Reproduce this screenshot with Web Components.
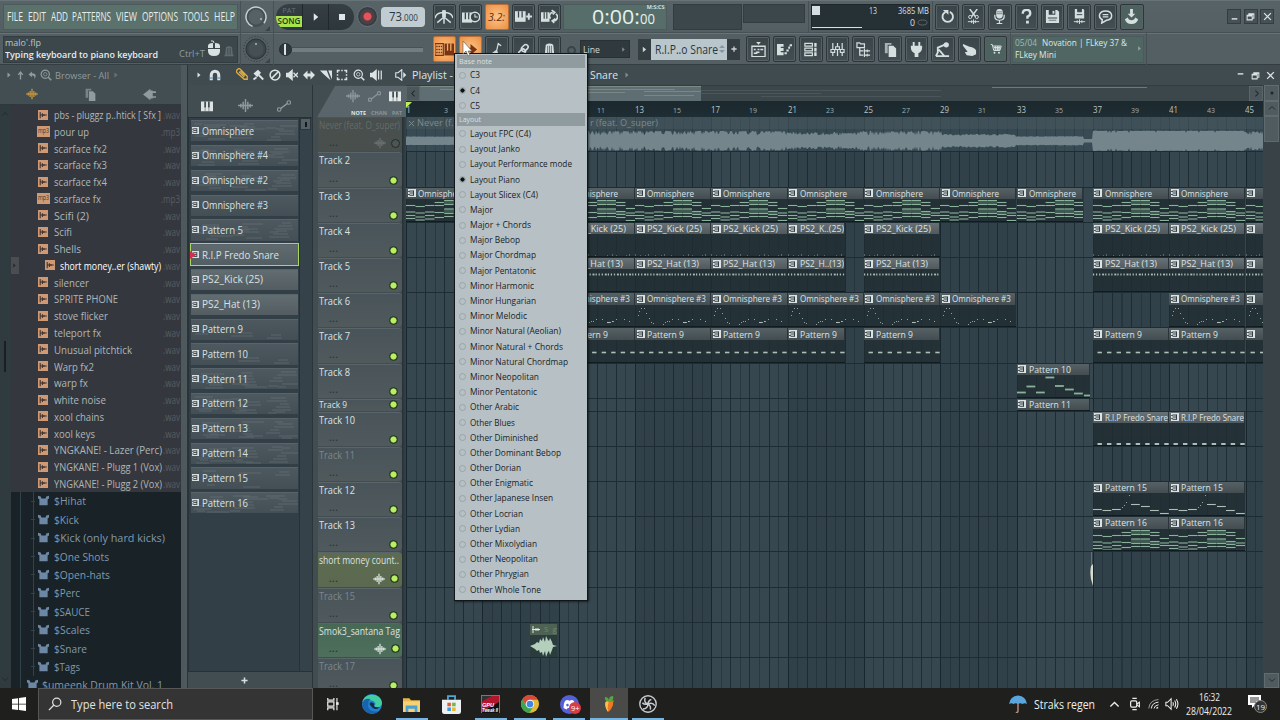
<!DOCTYPE html>
<html lang="en">
<head>
<meta charset="utf-8">
<title>FL Studio</title>
<style>
  html, body { margin: 0; height: 100%; overflow: hidden; background: #2c373c; }
  body { font-family: "Open Sans", "Noto Sans", sans-serif; color: #dbe2e3; }
</style>
</head>
<body>
<fl-desktop></fl-desktop>

<script>
// 16x16 glyphs, all drawn with currentColor
const ICONS = {
  right: '<path d="M5 3l6 5-6 5z" fill="currentColor"/>',
  up: '<path d="M8 15V3M4 7l4-5 4 5" fill="none" stroke="currentColor" stroke-width="2.400"/>',
  undo: '<path d="M7 1L1 6l6 5V8q6-1 4 7 7-10-4-11z" fill="currentColor"/>',
  search: '<circle cx="7" cy="7" r="5.5" fill="none" stroke="currentColor" stroke-width="1.6"/><circle cx="7" cy="7" r="2.3" fill="none" stroke="currentColor"/><path d="M11 11l4 4" stroke="currentColor" stroke-width="2.2"/>',
  wave: '<path d="M0 8h16M3 6v4M5.5 4v8M8 1v14M10.500 4v8M13 6v4" stroke="currentColor" stroke-width="1.6" fill="none"/>',
  pages: '<path d="M2 1h7v2H5v9H2z" fill="currentColor" opacity=".7"/><path d="M6 4h5l3 3v9H6z" fill="currentColor"/>',
  plugin: '<path d="M0 8l4-3 5-4v14l-5-4zM9 3h3v10H9zM12 4h4v2h-4zM12 10h4v2h-4z" fill="currentColor"/>',
  magnet: '<path d="M3 15V8a5 5 0 0 1 10 0v7" fill="none" stroke="currentColor" stroke-width="4"/><path d="M1 12h4M11 12h4" stroke="#6fa5c9" stroke-width="2"/>',
  pencil: '<path d="M1 3q3-4 5-1l9 9v4h-4L2 7q-2-2-1-4zM4 5l7 7M6 4l6 6" fill="none" stroke="currentColor" stroke-width="1.7"/>',
  brush: '<path d="M2 6l6-5 4 4-5 6z" fill="currentColor"/><path d="M9 8l5 5M6 11l-4 3M12 11l3 3" fill="none" stroke="currentColor" stroke-width="2.400"/>',
  no: '<circle cx="8" cy="8" r="6.5" fill="none" stroke="currentColor" stroke-width="2"/><path d="M3.500 12.500l9-9" stroke="currentColor" stroke-width="2"/>',
  mute: '<path d="M0 5h3l6-5v16l-6-5H0z" fill="currentColor"/><path d="M10 5l6 6M16 5l-6 6" stroke="currentColor" stroke-width="1.700"/>',
  slip: '<path d="M0 8l6-6v4h4V2l6 6-6 6v-4H6v4z" fill="currentColor"/>',
  slice: '<path d="M0 2h9l5 13-9-8zM11 2h5v12z" fill="currentColor"/>',
  select: '<path d="M5 2H2v3M11 2h3v3M2 11v3h3M14 11v3h-3M2 7v2M14 7v2M7 2h2M7 14h2" fill="none" stroke="currentColor" stroke-width="2"/>',
  play2: '<path d="M0 5h3l6-5v16l-6-5H0z" fill="currentColor"/><path d="M11.500 2v12M15 2v12" stroke="currentColor" stroke-width="1.600"/>',
  speaker: '<path d="M1 5h3l5-4v14l-5-4H1z" fill="none" stroke="currentColor" stroke-width="1.500"/><path d="M11 4l4 4-4 4z" fill="currentColor"/>',
  piano: '<path d="M0 2h16v13H0z" fill="currentColor"/><path d="M5.500 2v8M10.500 2v8" stroke="#39454a" stroke-width="2.200"/><path d="M5.500 10v5M10.500 10v5" stroke="#39454a" stroke-width=".7"/>',
  auto: '<path d="M4 11l8-6" stroke="currentColor" stroke-width="1.500"/><circle cx="2.500" cy="12" r="2" fill="none" stroke="currentColor" stroke-width="1.300"/><circle cx="13.500" cy="4" r="2" fill="none" stroke="currentColor" stroke-width="1.300"/>',
  metro: '<path d="M8 8L2 13M8 8l6 5M8 2v12M0 9q1-5 8-5 7 0 8 5" fill="none" stroke="currentColor" stroke-width="1.300"/><path d="M6.300 2h3.400v6H6.300z" fill="currentColor"/>',
  pianoclock: '<path d="M0 4h9v9H0z" fill="currentColor"/><path d="M3 4v6M6 4v6" stroke="#39454a" stroke-width="1.200"/><circle cx="11.500" cy="8" r="4.200" fill="#39454a" stroke="currentColor" stroke-width="1.300"/><path d="M11.500 5.500V8H14" fill="none" stroke="currentColor"/>',
  pianoplus: '<path d="M0 3h10v10H0z" fill="currentColor"/><path d="M3.300 3v6M6.700 3v6" stroke="#39454a" stroke-width="1.200"/><path d="M13 5v6M10.500 8h5.500" stroke="currentColor" stroke-width="1.800"/>',
  pianoloop: '<path d="M0 4h8v9H0z" fill="currentColor"/><path d="M3 4v6M5.500 4v6" stroke="#39454a" stroke-width="1.100"/><path d="M9 10a3.600 3.600 0 0 1 2-6M14 5.500a3.600 3.600 0 0 1-2 6.500M10 2l3 2-2 2M13.500 10l-3 2 2 2" fill="none" stroke="currentColor" stroke-width="1.500"/>',
  typing: '<path d="M0 3h7v10H0z" fill="none" stroke="currentColor" stroke-width="1"/><path d="M1 5.500h5M1 8h5M1 10.500h5" stroke="currentColor" stroke-width="1.400" stroke-dasharray="1.300 .6"/><path d="M8 3h8v10H8z" fill="currentColor"/><path d="M10.600 3v6M13.300 3v6" stroke="#f3ad68" stroke-width="1.100"/>',
  arrowr: '<path d="M2 6h6V2l7 6-7 6v-4H2z" fill="currentColor"/>',
  note: '<path d="M10 1l-2 9M4 12l4-3 1 3-4 3zM10 2l3 2" fill="currentColor" stroke="currentColor" stroke-width="1.300"/>',
  link: '<rect x="7" y="2" width="5" height="8" rx="2.500" transform="rotate(45 9 6)" fill="none" stroke="currentColor" stroke-width="1.600"/><rect x="4" y="7" width="5" height="8" rx="2.500" transform="rotate(45 6.500 11)" fill="none" stroke="currentColor" stroke-width="1.600"/>',
  multi: '<path d="M4 3q4-3 8 0l1 10H3zM2 13h12v2H2z" fill="currentColor"/><path d="M6 4v9M8 4v9M10 4v9" stroke="#39454a" stroke-width=".7"/>',
  playlist: '<path d="M5.500 0h5L8 3z" fill="currentColor"/><path d="M1 4.500h14v11H1z" fill="none" stroke="currentColor" stroke-width="1.400"/><path d="M3 12h3v-1h3M7 8h2M10 8h3M3 8h2" stroke="currentColor" stroke-width="1.600" fill="none"/>',
  roll: '<path d="M0 2h7v3H4v1.500h3v3H4V11h3v3H0z" fill="currentColor"/><path d="M8 12h2.500M10 9h2.500M12 6h2M13.500 3.500H16" stroke="currentColor" stroke-width="2.200"/>',
  rack: '<path d="M2 1.500h8v3H2zM2 6.500h8v3H2zM2 11.500h8v3H2z" fill="none" stroke="currentColor" stroke-width="1.300"/><path d="M12 1h2.500v4H12zM12 6h2.500v4H12zM12 11h2.500v4H12z" fill="currentColor"/>',
  mixer: '<path d="M3 1v14M8 1v14M13 1v14" stroke="currentColor" stroke-width="1.300"/><path d="M1 8h4v3H1zM6 5h4v3H6zM11 8h4v3h-4z" fill="#39454a" stroke="currentColor" stroke-width="1.200"/>',
  tree: '<path d="M1 1h3l1 1h4v4H1zM4 6v8h4M4 9.500h4" fill="none" stroke="currentColor" stroke-width="1.300"/><path d="M9 7v5M9 12v4M12 8v3M12 12.500v3M9 9.500h6M9 14h6" stroke="currentColor" stroke-width="1.200"/>',
  plug: '<path d="M4 0h2v4h4V0h2v4h2v2q0 4-4 6v4H6v-4Q2 10 2 6V4h2z" fill="currentColor"/>',
  worker: '<circle cx="12" cy="3" r="2.800" fill="currentColor"/><path d="M10 3L3 6v5l-2 4M4 8l6 7M1 15h14" fill="none" stroke="currentColor" stroke-width="2"/>',
  hand: '<path d="M1 2l7 3q6 1 7 4v4l-4 2-6-1-2-3 3-.5L1 4z" fill="currentColor"/>',
  cart: '<path d="M1 2h2l2 8h8l2-6H4M5 6h9M6 8h8M7 4v6M10 4v6M12 4v6" fill="none" stroke="currentColor" stroke-width="1.300"/><circle cx="6" cy="13" r="1.300" fill="currentColor"/><circle cx="12" cy="13" r="1.300" fill="currentColor"/>',
  reset: '<path d="M6 3a5.600 5.600 0 1 0 4.500 0" fill="none" stroke="currentColor" stroke-width="2"/><path d="M3 1h6v5z" fill="currentColor"/>',
  cut: '<path d="M4 0l6 8M12 0L6 8" stroke="currentColor" stroke-width="1.500"/><circle cx="4.500" cy="8.500" r="1.700" fill="none" stroke="currentColor"/><circle cx="11.500" cy="8.500" r="1.700" fill="none" stroke="currentColor"/><path d="M2 13.500h12M6 12v3M8 11v5M10 12v3" stroke="currentColor"/>',
  mic: '<rect x="4.500" y="0" width="7" height="10" rx="3.300" fill="currentColor"/><path d="M3 6v2q0 4 5 4t5-4V6M8 12v4M5 15.500h6" fill="none" stroke="currentColor" stroke-width="1.300"/><path d="M5 3h6M5 5h6" stroke="#39454a" stroke-width=".6"/>',
  help: '<path d="M4 5q0-4 4.300-4Q12 1 12 4.500 12 7 9 8v2.500" fill="none" stroke="currentColor" stroke-width="2.500"/><path d="M7.500 12.500h3v3h-3z" fill="currentColor"/>',
  save: '<path d="M1 1h12l2 2v12H1z" fill="currentColor"/><path d="M4 1h7v5H4zM3 9h10v1H3z" fill="#39454a"/><path d="M8 2h2v3H8z" fill="currentColor"/><path d="M4 12h8" stroke="#39454a" stroke-width=".7"/>',
  savenew: '<path d="M3 0h9l1 1v9H3z" fill="currentColor"/><path d="M6 0h4v3H6zM5 6h6" fill="#39454a" stroke="#39454a"/><path d="M2 13.500h12M5.500 12v3M8 11v5M10.500 12v3" stroke="currentColor"/>',
  chat: '<path d="M8 2c8 0 9 9 1 10l-5 3 .6-3.500C-.5 9 1 2 8 2z" fill="none" stroke="currentColor" stroke-width="1.600"/><path d="M5 6h6M5 8.500h6" stroke="currentColor" stroke-width="1.300"/>',
  download: '<path d="M6.500 0h3v5H12L8 9 4 5h2.500z" fill="currentColor"/><path d="M1 11l3-2 1 2q3 2 6 0l1-2 3 2q-1 5-7 5t-7-5z" fill="currentColor"/>',
  min: '<path d="M3 11h10v2.500H3z" fill="currentColor"/>',
  max: '<path d="M2 6h9v8H2zM5 6V3h9v8h-3M2 7h9M5 4h9" fill="none" stroke="currentColor" stroke-width="1.800"/>',
  close: '<path d="M2 2l12 12M14 2L2 14" stroke="currentColor" stroke-width="2.200"/>',
  plus: '<path d="M8 1v14M1 8h14" stroke="currentColor" stroke-width="3.500"/>',
  pat: '<path d="M0 0h16v16H0V12h4v-2H0V6h4V4H0z" fill="currentColor"/><path d="M3 4h8M3 8h8M3 12.500h8M11 3v10.500" stroke="#323d42" stroke-width="2"/>',
  folder: '<path d="M0 1l4 1 1 3h6l1-3 4-1v4l-2 1v9H2V6L0 5z" fill="currentColor"/>',
  wavfile: '<path d="M0 0h16v16H0z" fill="#cf9973"/><path d="M3.500 3v10M3 8h11M7 5v6M9.500 6.500v3" stroke="#3a3232" stroke-width="1.700"/>',
  chevl: '<path d="M10 3L5 8l5 5" fill="none" stroke="currentColor" stroke-width="1.800"/>',
  chevr: '<path d="M6 3l5 5-5 5" fill="none" stroke="currentColor" stroke-width="1.800"/>',
  chevu: '<path d="M2 11l6-6 6 6" fill="none" stroke="currentColor" stroke-width="1.800"/>',
  chevd: '<path d="M2 5l6 6 6-6" fill="none" stroke="currentColor" stroke-width="1.800"/>',
  dot: '<circle cx="8" cy="8" r="2" fill="currentColor"/>',
  mouse: '<path d="M2 6q0-3 5-3V8H2zM9 3q5 0 5 3v2H9zM2 9h12v2q0 5-6 5t-6-5z" fill="currentColor"/><path d="M8 3Q8 0 5 1" fill="none" stroke="currentColor"/>',
  win: '<path d="M0 2.300l7-1v6.400H0zM8 1.200L16 0v7.700H8zM0 8.500h7v6.400l-7-1zM8 8.500h8V16l-8-1.200z" fill="#fff"/>',
  lens: '<circle cx="10" cy="6" r="4.700" fill="none" stroke="currentColor" stroke-width="1.400"/><path d="M6.500 9.500L1 15" stroke="currentColor" stroke-width="1.500"/>',
  taskview: '<path d="M2 1v2.500h7V1M2 15v-2.500h7V15M2 5.500h7v5H2z" fill="none" stroke="currentColor" stroke-width="1.400"/><path d="M12.500 1v14" stroke="currentColor" stroke-width="1.300"/><path d="M11.500 6h3v3h-3z" fill="currentColor"/>',
  edge: '<circle cx="8" cy="8" r="8" fill="#2181cf"/><path d="M.3 6.500C2-2 15.500-1 16 7c0 4-5 4.500-6 2.500C13 6 6 3 .3 6.500z" fill="#42cfa0"/><path d="M5 8c-1 5 4 7 8.500 5.500C8 19-2 13 1 6q1-3 6-2-2 1-2 4z" fill="#1b62ae"/><path d="M6 8q1-3 4 0-2 3 4 2.500-4 4-8-2.500z" fill="#182c40"/>',
  explorer: '<path d="M0 2h6l1.500 2H16v11H0z" fill="#e7b64b"/><path d="M0 5h16v10H0z" fill="#f6d273"/><path d="M2.500 15V9h11v6H11v-3H5v3z" fill="#4aa2d2"/>',
  store: '<path d="M5 4V1h6v3" fill="none" stroke="#4ba8d8" stroke-width="1.500"/><path d="M0 4h16v10q0 2-2 2H2q-2 0-2-2z" fill="#eef1f2"/><path d="M4.500 6.500h3v3h-3z" fill="#e25b3b"/><path d="M8.500 6.500h3v3h-3z" fill="#78b644"/><path d="M4.500 10.500h3v3h-3z" fill="#3b9ad8"/><path d="M8.500 10.500h3v3h-3z" fill="#e8b73a"/>',
  chrome: '<circle cx="8" cy="8" r="8" fill="#e3b93a"/><path d="M1.200 3.800A8 8 0 0 0 7.500 16L11 10 8 8 4.500 9z" fill="#3fa354"/><path d="M1.100 4A8 8 0 0 1 15 4.200H8L5 9z" fill="#d9483b"/><circle cx="8" cy="8" r="3.800" fill="#fff"/><circle cx="8" cy="8" r="3" fill="#4285e8"/>',
  discord: '<circle cx="8" cy="8" r="8" fill="#5560d8"/><path d="M3 11q0-5 2-6.500l2-.3.4.6h1.200l.4-.6 2 .3Q13 6 13 11l-2.500 1.200L9.500 11h-3l-1 1.200z" fill="#fff"/><circle cx="6.300" cy="8.500" r="1.100" fill="#5560d8"/><circle cx="9.700" cy="8.500" r="1.100" fill="#5560d8"/>',
  fruit: '<path d="M4.500 6q4-3 7.500 0 1 4-4 9.500-1 .5-1.500-.5-3-5-2-9z" fill="#ee7a22"/><path d="M4.500 6q3-2 3.500-1-2 6-1 10.500-1 0-1-1-2.500-4.500-1.500-8.500z" fill="#f9c04e"/><path d="M8 6Q3 5 4 1q3 0 4 3 0-4 4-4 1 3-1 4 2 0 2 2z" fill="#59a63e"/>',
  obs: '<circle cx="8" cy="8" r="7.300" fill="#1c1d20" stroke="#c9cdce" stroke-width="1.200"/><path d="M8 8Q4 7 5.500 2.500M8 8q4-2 6 1.500M8 8q0 4-4.500 4.500M8 8q0-3 3-4M8 8q3 2 2 5M8 8Q5 9 3 7" fill="none" stroke="#c9cdce" stroke-width="1.300"/>',
  umbrella: '<path d="M8 6v8q0 2-2 1.500" stroke="#b98a79" stroke-width="1.300" fill="none"/><path d="M0 8Q1 1 8 .5 15 1 16 8q-2-1.500-4 0-2-1.500-4 0-2-1.500-4 0-2-1.500-4 0z" fill="#5aa5dc"/>',
  cam: '<rect x="3" y="4.500" width="7" height="7" rx="1.500" fill="none" stroke="currentColor" stroke-width="1.400"/><path d="M10 8l3-2v5l-3-2M5 1.500h5M5 14.500h5" fill="none" stroke="currentColor" stroke-width="1.300"/>',
  wifi: '<g fill="none" stroke="currentColor" stroke-width="1.300"><path d="M1 14Q2 3 14 2" opacity=".6"/><path d="M4.500 14Q5 6.500 14 5.500M8 14Q8.500 10 14 9"/></g><path d="M10.500 14q0-2 3-2.500V14z" fill="currentColor"/>',
  vol: '<path d="M1 6h2l4-4v12l-4-4H1z" fill="none" stroke="currentColor" stroke-width="1.200"/><path d="M9 6q1 2 0 4M11 4q2.500 4 0 8M13 2.500q3.500 5.500 0 11" fill="none" stroke="currentColor" stroke-width="1.200"/>'
};

class FlIcon extends HTMLElement {
  constructor() {
    super();
    this.attachShadow({ mode: 'open' });
  }
  connectedCallback() {
    const s = this.getAttribute('s') || 12;
    this.shadowRoot.innerHTML = `
      <style>:host { display: inline-flex; flex: none; } svg { display: block; }</style>
      <svg width="${s}" height="${s}" viewBox="0 0 16 16">${ICONS[this.getAttribute('n')] || ''}</svg>`;
  }
}
customElements.define('fl-icon', FlIcon);

// text squeezed to a given width, for the condensed faces of the interface
class FlText extends HTMLElement {
  constructor() {
    super();
    this.attachShadow({ mode: 'open' });
    this.shadowRoot.innerHTML = `
      <style>
        :host { display: inline-block; flex: none; white-space: nowrap; }
        span { display: inline-block; transform-origin: 0 50%; }
      </style><span><slot></slot></span>`;
  }
  connectedCallback() {
    const span = this.shadowRoot.querySelector('span');
    const natural = span.getBoundingClientRect().width;
    if (!natural) return;
    const w = +this.getAttribute('w');
    this.style.width = w + 'px';
    span.style.transform = `scaleX(${w / natural})`;
  }
}
customElements.define('fl-text', FlText);

// base for everything below: render once into the shadow root
class FlElement extends HTMLElement {
  connectedCallback() {
    if (this.shadowRoot) return;
    this.attachShadow({ mode: 'open' });
    this.shadowRoot.innerHTML = `<style>* { box-sizing: border-box; }${this.css()}</style>${this.html()}`;
  }
}

class FlButton extends FlElement {
  css() {
    return `
      :host { display: flex; flex: none; width: 23.4px; height: 26px; margin-right: 3px;
        align-items: center; justify-content: center; color: #d5dfe0; border-radius: 2px;
        background: linear-gradient(#3a454a, #434e53); border: 1px solid #2c363b; box-shadow: 0 0 0 1px #566165 inset; box-sizing: border-box; }
      :host([on]) { background: radial-gradient(#fbc58b, #ee8f42); color: #7a3412; border-color: #b96e35; box-shadow: none; }
      :host([green]) { background: #4d625f; }`;
  }
  html() {
    const n = this.getAttribute('n');
    return `${n ? `<fl-icon n="${n}" s="${this.getAttribute('s') || 15}"></fl-icon>` : ''}<slot></slot>`;
  }
}
customElements.define('fl-button', FlButton);

class FlKnob extends FlElement {
  css() { return ':host { display: flex; flex: none; width: 32px; justify-content: center; }'; }
  html() {
    const big = this.hasAttribute('ring');
    return `<svg width="28" height="28" viewBox="0 0 28 28">
      ${big ? '<circle cx="13" cy="14" r="10" fill="#444e53" stroke="#c5cfd1" stroke-width="1.500" stroke-dasharray="50 13" transform="rotate(110 13 14)"/><circle cx="13" cy="14" r="7.500" fill="#566166"/><circle cx="18" cy="16" r="1" fill="#b5c0c2"/>'
            : '<circle cx="13" cy="14" r="12.500" fill="none" stroke="#2d373b" stroke-dasharray="1 2"/><circle cx="13" cy="14" r="10" fill="#3c474b" stroke="#2a3438"/><circle cx="13" cy="14" r="7.500" fill="#454f54"/><circle cx="13" cy="9" r="1" fill="#aab4b6"/>'}
      <path d="M27 23v5h-5z" fill="#3a4449"/></svg>`;
  }
}
customElements.define('fl-knob', FlKnob);

class FlToolbar extends FlElement {
  css() {
    return `
      :host { display: block; height: 65px; background: linear-gradient(#586367, #545f64 50%, #545f64); overflow: hidden; }
      .row { display: flex; align-items: center; height: 33px; border-top: 1px solid #687377; border-bottom: 1px solid #465156; padding-left: 3px; }
      .row + .row { height: 32px; border-bottom: 1px solid #333d42; }
      .panel { flex: none; display: flex; align-items: center; height: 26px; border: 1px solid #4b5a5b; }
      .menu { width: 235px; background: #5a716c; padding-left: 3px; font-size: 12px; color: #e5eeec; }
      .menu fl-text { margin-right: 4.800px; }
      .hint { width: 235px; background: #3c474c; border-color: #323c41; height: 27px; padding-left: 1px; font-size: 9px; line-height: 12px; color: #bcc5c7; position: relative; }
      .hint b { display: block; font-weight: 600; color: #e6ecec; }
      .hint .keys { position: absolute; right: 2px; top: 8px; display: flex; align-items: center; color: #8f9a9d; gap: 1px; }
      .hint .keys fl-text { padding-top: 3px; }
      .sep { flex: none; width: 1px; height: 32px; background: #465156; }
      .transport { display: flex; width: 78px; height: 26px; margin-left: 2px; border-radius: 13px; overflow: hidden; background: linear-gradient(#353f44, #2c363b); }
      .transport > div { display: flex; align-items: center; justify-content: center; width: 26px; border-left: 1px solid #20282c; color: #e2e9ea; }
      .transport .mode { display: block; border: 0; text-align: center; font-size: 7.500px; line-height: 12px; color: #657074; }
      .mode i { display: block; height: 11px; background: #a7e24f; color: #25351c; font: 600 8px/10px "Open Sans", sans-serif; }
      .rec { flex: none; width: 21px; height: 21px; margin-left: 3px; border-radius: 50%; background: radial-gradient(#e8535a 0 3.500px, #4b4146 4.500px 7px, #363e42 8px); border: 1px solid #687276; }
      .tempo { flex: none; display: flex; justify-content: flex-end; align-items: baseline; width: 44px; height: 20px; margin: 0 7.500px 0 3px; border-radius: 4px; background: #c0ccd1; color: #2b3840; font-size: 13px; line-height: 19px; padding-right: 7px; }
      .tempo small { font-size: 9px; }
      .snap { color: #5d2b10; font: italic 11px "Open Sans", sans-serif; }
      .time { width: 104px; margin: 0 6px 0 -1px; background: #576d69; color: #e4f2ee; justify-content: flex-end; align-items: baseline; position: relative; padding-right: 11px; font-size: 20px; line-height: 24px; }
      .time .u { position: absolute; right: 2px; top: 0; font: 600 5.500px/5px "Open Sans", sans-serif; }
      .dark { background: #3c474b; border-color: #333d41; }
      .cpu { width: 119px; margin-left: 2px; background: #263136; border: 1px solid #1d272b; font-size: 8.500px; color: #d7dfe0; align-items: stretch; }
      .cpu .g { width: 50px; border-bottom: 1px solid #d6dedf; margin-bottom: 1px; }
      .cpu .g::before { content: ""; display: block; width: 8px; height: 9px; background: #d5dee0; margin-top: 1px; }
      .cpu .c { width: 67px; display: grid; grid-template: 12px 12px / 15px 1fr; line-height: 12px; text-align: right; }
      .cpu .c fl-text { justify-self: end; }
      .cpu .z { display: flex; justify-content: flex-end; align-items: center; gap: 3px; padding-right: 1px; }
      .wb { flex: none; display: flex; align-items: center; justify-content: center; width: 14px; height: 15px; margin-right: 2.500px; background: #465156; border: 1px solid #333d42; color: #e0e6e7; }
      .slider { display: flex; align-items: center; width: 158.500px; padding-left: 5px; }
      .slider::before { content: ""; flex: none; width: 11px; height: 11px; border-radius: 50%; border: 1px solid #222b2f; background: linear-gradient(90deg, #2f393d 40%, #dbe3e4 40% 58%, #2f393d 58%); }
      .slider::after { content: ""; width: 131px; height: 4px; background: #727d81; border-top: 1px solid #475156; }
      .ring { flex: none; width: 9px; height: 9px; border-radius: 50%; border: 2px solid #39444a; margin: 2px 4px 0 3px; }
      .drop { flex: none; display: flex; align-items: center; justify-content: space-between; width: 50px; height: 18px; padding: 0 2px; background: #30393d; border: 1px solid #283135; font-size: 9.500px; color: #cfd7d8; }
      .pat { display: flex; flex: none; height: 21px; margin: 0 6px 0 8px; background: #343e43; color: #cbd4d6; }
      .pat > span { display: flex; align-items: center; justify-content: center; width: 13px; }
      .pat .name { width: 76px; background: #b9c7cc; color: #2a363d; font-size: 13px; justify-content: space-between; padding: 0 2px 0 4px; }
      .name svg { flex: none; }
      .news { width: 132px; height: 27px; margin: 0 2px 0 1px; background: #506663; font-size: 8.500px; line-height: 12px; padding-left: 2px; color: #dde8e5; }
      .news p { flex: 1; margin: 0; }
      .news p > span { display: flex; gap: 5px; height: 12px; }
      .news em { color: #a7b6b4; font-style: normal; }`;
  }
  html() {
    const buttons = list => list.map(n => `<fl-button n="${n}"></fl-button>`).join('');
    return `
      <div class="row">
        <div class="panel menu">
          <fl-text w="16">FILE</fl-text><fl-text w="18">EDIT</fl-text><fl-text w="17">ADD</fl-text><fl-text w="39">PATTERNS</fl-text><fl-text w="21">VIEW</fl-text><fl-text w="36">OPTIONS</fl-text><fl-text w="26">TOOLS</fl-text><fl-text w="21">HELP</fl-text>
        </div>
        <span class="sep" style="margin-left:2px"></span><fl-knob ring></fl-knob><span class="sep"></span>
        <div class="transport">
          <div class="mode">PAT<i>SONG</i></div>
          <div><fl-icon n="right" s="12"></fl-icon></div>
          <div><svg width="6" height="6"><path d="M0 0h6v6H0z" fill="#dfe6e7"/></svg></div>
        </div>
        <div class="rec"></div>
        <div class="tempo"><fl-text w="13">73</fl-text><small><fl-text w="16">.000</fl-text></small></div>
        <fl-button n="metro" s="18"></fl-button><fl-button n="pianoclock" s="18"></fl-button>
        <fl-button on><span class="snap"><fl-text w="17">3.2:</fl-text></span></fl-button>
        <fl-button n="pianoplus" s="17"></fl-button><fl-button n="pianoloop" s="17"></fl-button>
        <div class="panel time"><fl-text w="48">0:00:</fl-text><span style="font-size:15px"><fl-text w="15">00</fl-text></span><span class="u">M:S:CS</span></div>
        <div class="panel dark" style="width:69px"></div>
        <div class="panel dark" style="width:62px;height:19px;margin:-7px 3px 0 1px"></div>
        <span class="sep"></span>
        <div class="panel cpu"><div class="g"></div><div class="c"><fl-text w="8">13</fl-text><fl-text w="31">3685 MB</fl-text><span></span><span class="z"><fl-text w="5">0</fl-text><svg width="11" height="7"><ellipse cx="5.500" cy="3.500" rx="4.500" ry="2.500" fill="none" stroke="#5c686c"/></svg></span></div></div>
        <span class="sep" style="margin:0 2px 0 2px"></span>
        ${buttons(['reset', 'cut', 'mic', 'help', 'save', 'savenew', 'chat'])}<fl-button green n="download"></fl-button>
        <span style="flex:1"></span>
        <span class="wb"><fl-icon n="min" s="9"></fl-icon></span><span class="wb"><fl-icon n="max" s="9"></fl-icon></span><span class="wb" style="margin-right:6px"><fl-icon n="close" s="9"></fl-icon></span>
      </div>
      <div class="row">
        <div class="panel hint"><div><fl-text w="36">malo'.flp</fl-text><b><fl-text w="153">Typing keyboard to piano keyboard</fl-text></b></div>
          <div class="keys"><fl-text w="26">Ctrl+T</fl-text><span style="color:#d9e0e1;margin-top:-5px"><fl-icon n="mouse" s="16"></fl-icon></span><span style="color:#606b6f"><fl-icon n="multi" s="12"></fl-icon></span></div>
        </div>
        <span class="sep" style="margin-left:2px"></span><fl-knob></fl-knob><span class="sep"></span>
        <div class="slider"></div>
        <fl-button on n="typing" s="19"></fl-button><fl-button on n="arrowr" s="15"></fl-button><fl-button n="note"></fl-button><fl-button n="link"></fl-button><fl-button n="multi"></fl-button>
        <span class="ring"></span>
        <div class="drop"><fl-text w="17">Line</fl-text><span style="color:#7f8b8e"><fl-icon n="right" s="7"></fl-icon></span></div>
        <div class="pat"><span><fl-icon n="right" s="9"></fl-icon></span><span class="name"><fl-text w="63">R.I.P..o Snare</fl-text><svg width="6" height="8"><path d="M0 3l3-3 3 3zM0 5l3 3 3-3z" fill="#8696a0"/></svg></span><span><fl-icon n="plus" s="6"></fl-icon></span></div>
        ${buttons(['playlist', 'roll', 'rack', 'mixer', 'tree', 'pages', 'plug', 'worker', 'hand'])}<fl-button green n="cart" s="12"></fl-button>
        <span class="sep"></span>
        <div class="panel news"><p><span><em><fl-text w="22">05/04</fl-text></em><fl-text w="85">Novation | FLkey 37 &amp;</fl-text></span><span><fl-text w="41">FLkey Mini</fl-text></span></p><span style="color:#93a5a3"><fl-icon n="right" s="7"></fl-icon></span></div>
        <span class="sep"></span>
      </div>`;
  }
}
customElements.define('fl-toolbar', FlToolbar);

const SAMPLES = [
  ['pbs - pluggz p..htick [ Sfx ]', 107], ['pour up', 35, 'mp3'], ['scarface fx2', 53], ['scarface fx3', 53], ['scarface fx4', 53],
  ['scarface fx', 47, 'mp3'], ['Scifi (2)', 35], ['Scifi', 18], ['Shells', 27], ['short money..er (shawty)', 101, 'wav', true],
  ['silencer', 35], ['SPRITE PHONE', 64], ['stove flicker', 54], ['teleport fx', 47], ['Unusual pitchtick', 78], ['Warp fx2', 40],
  ['warp fx', 34], ['white noise', 52], ['xool chains', 50], ['xool keys', 41], ['YNGKANE! - Lazer (Perc)', 108],
  ['YNGKANE! - Plugg 1 (Vox)', 108], ['YNGKANE! - Plugg 2 (Vox)', 108]
];
const FOLDERS = [['$Hihat', 32], ['$Kick', 25], ['$Kick (only hard kicks)', 111], ['$One Shots', 55], ['$Open-hats', 56], ['$Perc', 26],
  ['$SAUCE', 36], ['$Scales', 36], ['$Snare', 33], ['$Tags', 26]];

class FlBrowser extends FlElement {
  css() {
    return `
      :host { display: grid; grid-template: 40px 1fr / 11px 170px; width: 181px; overflow: hidden; background: #434e52; }
      header { grid-column: 1 / 3; color: #8f9b9e; border-bottom: 1px solid #2f393d; }
      .title { display: flex; align-items: center; height: 20px; padding-left: 5px; gap: 3px; font-size: 9.500px; }
      .tabs { display: flex; align-items: center; height: 18px; padding: 0 25px 0 26px; justify-content: space-between; }
      .bar { background: #303b3f; color: #1e272b; padding: 5px 0 5px 1px; display: flex; flex-direction: column; justify-content: space-between; position: relative; }
      .bar::after { content: ""; position: absolute; left: 4px; top: 236px; width: 2px; height: 31px; background: #182024; }
      .list { background: #182227; overflow: hidden; font-size: 11.500px; min-height: 0; }
      .files { background: #34383e; padding-top: 1.200px; color: #b0b6b8; }
      .f { display: flex; align-items: center; height: 16.780px; padding: 0 1px 0 27px; }
      .f > .ic { width: 16px; display: flex; align-items: center; }
      .f i { margin-left: auto; color: #585d62; font-style: normal; width: 0; display: flex; justify-content: flex-end; }
      .f.in { padding-left: 0; color: #fff; }
      .in .box { width: 8px; height: 17px; background: #4a4e53; color: #262b2f; margin-right: 26px; display: flex; align-items: center; }
      .in > .ic { width: 15px; }
      .mp3 { background: #cf9973; color: #4a3328; font-size: 7px; line-height: 9px; height: 11px; margin-left: -1px; padding: 0 1px; }
      .d { position: relative; display: flex; align-items: center; height: 18.400px; padding-left: 27px; color: #8299ab; gap: 5px; }
      .d::before { content: ""; position: absolute; left: 9px; top: 0; width: 12px; height: 100%; border: 1px solid #33434a; border-width: 0 1px; }
      .d::after { content: ""; position: absolute; left: 20px; top: 9px; width: 4px; height: 1px; background: #33434a; }
      .d.last { padding-left: 16px; gap: 4px; }
      .d.last::before { border-right: 0; }
      .d.last::after { display: none; }
      .d fl-icon { color: #6d88a5; }`;
  }
  html() {
    const file = ([name, w, ext = 'wav', open]) => {
      const icon = ext === 'mp3' ? '<span class="mp3"><fl-text w="11">mp3</fl-text></span>' : '<fl-icon n="wavfile" s="10"></fl-icon>';
      const box = open ? '<span class="box"><fl-icon n="right" s="7"></fl-icon></span>' : '';
      return `<div class="f ${open ? 'in' : ''}">${box}<span class="ic">${icon}</span><fl-text w="${w}">${name}</fl-text><i><fl-text w="${ext === 'mp3' ? 19 : 17}">.${ext}</fl-text></i></div>`;
    };
    return `
      <header>
        <div class="title"><fl-icon n="right" s="8"></fl-icon><fl-icon n="up" s="9"></fl-icon><fl-icon n="undo" s="9"></fl-icon><fl-icon n="search" s="12"></fl-icon><fl-text w="54">Browser - All</fl-text><span style="color:#68757a"><fl-icon n="right" s="8"></fl-icon></span></div>
        <div class="tabs"><span style="color:#d19a3c"><fl-icon n="wave" s="12"></fl-icon></span><fl-icon n="pages" s="13"></fl-icon><fl-icon n="plugin" s="13"></fl-icon></div>
      </header>
      <div class="bar"><fl-icon n="chevu" s="8"></fl-icon><fl-icon n="chevd" s="8"></fl-icon></div>
      <div class="list">
        <div class="files">${SAMPLES.map(file).join('')}</div>
        ${FOLDERS.map(([n, w]) => `<div class="d"><fl-icon n="folder" s="11"></fl-icon><fl-text w="${w}">${n}</fl-text></div>`).join('')}
        <div class="d last"><fl-icon n="folder" s="11"></fl-icon><fl-text w="121">$umeenk Drum Kit Vol. 1</fl-text></div>
      </div>`;
  }
}
customElements.define('fl-browser', FlBrowser);

const PATTERNS = [['Omnisphere', 52, 1], ['Omnisphere #4', 66, 1], ['Omnisphere #2', 66, 1], ['Omnisphere #3', 66, 0], ['Pattern 5', 41, 1],
  ['R.I.P Fredo Snare', 77, 0], ['PS2_Kick (25)', 61, 0], ['PS2_Hat (13)', 58, 0], ['Pattern 9', 41, 2], ['Pattern 10', 46, 2], ['Pattern 11', 46, 1],
  ['Pattern 12', 46, 1], ['Pattern 13', 46, 1], ['Pattern 14', 46, 1], ['Pattern 15', 46, 2], ['Pattern 16', 46, 1]];

class FlPicker extends FlElement {
  css() {
    return `
      :host { display: grid; grid-template: 32px 1fr 16px / 112px 13px; width: 125px; background: #424d52; border-right: 1px solid #2b3539; box-sizing: border-box; overflow: hidden; }
      .tabs { grid-column: 1 / 3; display: flex; align-items: center; justify-content: space-between; padding: 9px 22px 0 13px; color: #8d999c; }
      .list { background: #333f47; border: 1px solid #273136; padding: 2.200px 1px 0 2px; min-height: 0; }
      .p { position: relative; display: flex; align-items: center; height: 21.300px; margin-bottom: 3.500px; padding: 0 0 1.500px 1px; gap: 3px; font-size: 10.500px; color: #d9e0e2;
        background: linear-gradient(#4d595f, #444f55); border-top: 1px solid #58646a; }
      .p svg { position: absolute; right: 0; top: 0; }
      .p.hot { background: linear-gradient(#626d72, #525c61); }
      .p.sel { background: linear-gradient(#606b70, #535e62); outline: 1px solid #a8d760; outline-offset: 0; }
      .p.sel::before { content: ""; position: absolute; left: -1px; top: 6px; border: 4px solid transparent; border-left: 6px solid #d92b4b; border-right: 0; }
      .scroll { background: #36424a; border: 1px solid #273136; border-left: 0; }
      .scroll i { display: flex; justify-content: center; align-items: center; width: 11px; height: 12px; background: #546065; border: 1px solid #2b363b; }
      .add { grid-column: 1 / 3; display: flex; align-items: center; padding-left: 53px; color: #d8dfe0; }`;
  }
  html() {
    const mini = (kind, i) => {
      let d = '';
      for (let r = 0; r < (kind === 1 ? 7 : kind); r++) {
        for (let c = 0; c < 3; c++) {
          const x = 2 + c * 36 + (r * 13 + i * 7) % 17;
          d += `M${x} ${3 + (r * 3 + c * 2 + i) % 17}h${8 + (r * 5 + c * 9) % 16}`;
        }
      }
      return `<svg width="106" height="20"><path d="${d}" stroke="#9aa8aa" stroke-width=".7" opacity=".35"/></svg>`;
    };
    return `
      <div class="tabs"><span style="color:#dde3e4"><fl-icon n="piano" s="12"></fl-icon></span><fl-icon n="wave" s="15"></fl-icon><fl-icon n="auto" s="14"></fl-icon></div>
      <div class="list">${PATTERNS.map(([n, w, kind], i) => `
        <div class="p ${i === 5 ? 'sel' : i === 6 || i === 7 ? 'hot' : ''}">${mini(kind, i)}<fl-icon n="pat" s="7"></fl-icon><fl-text w="${w}">${n}</fl-text></div>`).join('')}
      </div>
      <div class="scroll"><i><svg width="2" height="5"><path d="M0 0h2v5H0z" fill="#10181b"/></svg></i></div>
      <div class="add"><fl-icon n="plus" s="7"></fl-icon></div>`;
  }
}
customElements.define('fl-picker', FlPicker);

const BAR = 19.08;

// note previews as [x, y, length] in lane pixels
const CHORDS = [];
[[6, 12.5, 16, 19], [7, 13.5, 17.5, 20.5], [6, 12.5, 16, 19.5], [3, 6, 13, 18], [1, 5, 9.5, 14, 17], [1, 5, 9.5, 14, 17], [3, 6, 12, 15, 18], [9, 13.5, 16, 21]].forEach((ys, c) => {
  ys.forEach(y => CHORDS.push([c * BAR / 2, y, BAR / 2]));
});
const NOTES = {
  chords: CHORDS,
  kick: [0, 5, 10, 13, 20, 26, 29, 36, 48, 53, 57, 67, 70].map((x, i) => [x, i % 3 ? 21.500 : 20.500, 1]),
  hat: Array.from({ length: 25 }, (_, i) => [i * 3.050, 5, i % 4 === 3 ? 2.200 : 1.400]),
  melody: [[3, 10, 1], [4, 6, 1], [6, 3, 1], [9, 3, 1], [11, 8, 1], [14, 13, 1], [16, 17, 1], [18, 18, 1], [27, 21, 1], [28, 19, 1], [30, 17, 1], [32, 16, 1],
    [34, 16, 1], [37, 14, 1], [43, 14, 1], [48, 17, 4], [47, 21, 1], [53, 16, 2], [57, 14, 1], [65, 14, 1], [70, 16, 1]],
  dashes: Array.from({ length: 8 }, (_, i) => [4.500 + i * BAR / 2, 12, 4.600]),
  snare: Array.from({ length: 8 }, (_, i) => [4.500 + i * BAR / 2, 20.500, 4.600]),
  p10: [[0, 17, 9], [9.500, 11, 9], [19, 17, 9], [28.500, 2, 9], [38, 10.500, 9], [48, 14, 9], [57, 18, 9], [67, 20, 7]],
  p15: [[0, 16, 9], [9.500, 17, 9], [19, 16, 9], [29, 14, 1], [31, 12, 1], [33, 9, 1], [36, 2, 1], [38, 11, 9], [48, 13, 9], [57, 17, 9], [67, 20, 9]]
};

// [height, header label, label width, state, clips]; a clip is [bar, bars, label, width, notes]
const repeat = (bars, label, w, notes, short) => bars.map(b => [b, short && b === 21 ? 3 : 4, short && b === 21 ? short : label, short && b === 21 ? 44 : w, notes]);
const omni = repeat([1, 5, 9, 13, 17, 21, 25, 29, 33, 37, 41, 45], 'Omnisphere', 47, 'chords');
omni[8][1] = 3.5;
const p9 = repeat([9, 13, 17, 21, 25, 37, 41, 45], 'Pattern 9', 37, 'dashes');
p9[3][1] = 3;
const TRACKS = [
  [35.2, 'Never (feat. O_super)', 81, 'song', []],
  [35.2, 'Track 2', 31, '', []],
  [35.2, 'Track 3', 31, '', omni],
  [35.2, 'Track 4', 31, '', repeat([9, 13, 17, 21, 25, 37, 41, 45], 'PS2_Kick (25)', 55, 'kick', 'PS2_K..(25)')],
  [35.2, 'Track 5', 31, '', repeat([9, 13, 17, 21, 25, 37, 41, 45], 'PS2_Hat (13)', 52, 'hat', 'PS2_H..(13)')],
  [35.2, 'Track 6', 31, '', repeat([9, 13, 17, 21, 25, 29, 41, 45], 'Omnisphere #3', 59, 'melody')],
  [35.2, 'Track 7', 31, '', p9],
  [35.2, 'Track 8', 31, '', [[33, 3.85, 'Pattern 10', 42, 'p10']]],
  [12.9, 'Track 9', 28, '', [[33, 3.85, 'Pattern 11', 42, '']]],
  [35.2, 'Track 10', 36, '', [[37, 4, 'R.I.P Fredo Snare', 63, 'snare'], [41, 4, 'R.I.P Fredo Snare', 63, 'snare']]],
  [35.2, 'Track 11', 36, 'dim', []],
  [35.2, 'Track 12', 36, '', repeat([37, 41], 'Pattern 15', 42, 'p15')],
  [35.2, 'Track 13', 36, '', repeat([37, 41], 'Pattern 16', 42, 'chords')],
  [35.2, 'short money count..', 80, 'olive audio', []],
  [35.2, 'Track 15', 36, 'dim', []],
  [35.2, 'Smok3_santana Tag', 81, 'green audio', []],
  [35.2, 'Track 17', 36, 'dim', []]
];

class FlClip extends FlElement {
  css() {
    return `
      :host { display: block; position: absolute; top: 0; height: 100%; background: rgba(32, 45, 49, .8); border-bottom: 1.500px solid #111c20; box-sizing: border-box; overflow: hidden; }
      .h { display: flex; align-items: center; height: 11.500px; gap: 2.500px; padding-left: 1.500px; background: linear-gradient(#566166, #434d51); border-right: 1px solid #2b3539; font-size: 9.500px; line-height: 11px; color: #dce3e4; overflow: hidden; }
      :host([n=kick]) .h, :host([n=hat]) .h, :host([n=snare]) .h { background: linear-gradient(#687276, #505a5e); }
      svg { display: block; }`;
  }
  html() {
    const n = this.getAttribute('n');
    const thick = { dashes: 1.6, snare: 2, p10: 1.8, chords: 1.1, hat: 1.8 }[n] || 1.1;
    const color = n === 'chords' || n === 'p10' ? '#8ab29a' : '#adbfb8';
    const fill = n === 'chords' ? '<path d="M38 9.500h19v4.500H38zM57 12h9.500v3H57zM38 1.500h19v3.500H38z" fill="#5f8a70" opacity=".45" stroke="none"/>' : '';
    const notes = (NOTES[n] || []).map(([x, y, l]) => `<path d="M${x.toFixed(1)} ${y + .5}h${(l - .2).toFixed(1)}"/>`).join('');
    return `<div class="h"><fl-icon n="pat" s="8"></fl-icon><slot></slot></div><svg width="77" height="23" stroke="${color}" stroke-width="${thick}">${fill}${notes}</svg>`;
  }
}
customElements.define('fl-clip', FlClip);

class FlSongWave extends FlElement {
  css() {
    return `
      :host { display: block; position: relative; height: 100%; background: linear-gradient(rgba(70, 86, 93, .7) 0 12px, rgba(58, 80, 91, .5) 12px); }
      svg { display: block; }
      div { height: 12px; color: #7d898d; font-size: 9.500px; line-height: 12px; padding-left: 2px; display: flex; align-items: center; gap: 2px; }`;
  }
  html() {
    let seed = 7;
    const rnd = () => (seed = (seed * 16807) % 2147483647) / 2147483647;
    let top = '', bottom = '';
    for (let x = 0; x <= 858; x += 1) {
      let a = 10 - (rnd() > .55 ? rnd() * 4.5 : rnd());
      if (x < 182) a = 4 + rnd() * .3;
      else if (x > 380 && x < 455) a = 9 - rnd() * 3.5;
      else if (x > 535 && x < 610) a = 7 - rnd() * 1.8;
      else if (x >= 610 && x < 678) a = 4.8 - rnd() * .9;
      else if (x >= 678 && x < 687) a = 1.8;
      else if (x >= 687 && x < 840) a = 10.2 - (rnd() > .93 ? 2 : 0) - rnd() * .4;
      top += `L${x.toFixed(1)} ${(11.8 - a).toFixed(1)}`;
      bottom = `L${x.toFixed(1)} ${(11.8 + a).toFixed(1)}` + bottom;
    }
    return `<div><fl-icon n="close" s="7"></fl-icon><fl-text w="39">Never (f..</fl-text><span style="padding-left:132px"><fl-text w="68">r (feat. O_super)</fl-text></span></div>
      <svg width="858" height="23"><path d="M0 12${top}${bottom}z" fill="#74868c"/></svg>`;
  }
}
customElements.define('fl-song-wave', FlSongWave);

class FlTrack extends FlElement {
  css() {
    return `
      :host { display: grid; grid-template: 100% / 84px 4px 1fr; box-sizing: border-box; overflow: hidden; }
      .head { display: grid; grid-template: 14px 1fr / 1fr auto; min-height: 0; margin-bottom: 1px; padding: 0 4px 1px 1px; border-radius: 0 4px 4px 0; background: linear-gradient(#49545a, #505a5d); border-top: 1px solid #5a6569; font-size: 11px; line-height: 13px; color: #dbe2e3; }
      .head > fl-text { grid-column: 1 / 3; }
      .head i { font: 700 9px/8px "Open Sans"; color: #2b3539; align-self: end; padding: 0 0 3px 10px; letter-spacing: .5px; }
      .led { display: flex; align-items: center; gap: 5px; align-self: end; padding-bottom: 1px; }
      .led b { width: 9px; height: 9px; border-radius: 50%; border: 1px solid #27381f; background: radial-gradient(#b7f163 0 2.500px, #324324 3.800px); }
      .audio .led { color: #e2e9e4; }
      .head.dim { color: #7c878b; }
      .head.song { background: #484f4d; color: #636c6d; border-color: #4d5453; }
      .song .led { color: #6c7474; }
      .song .led b { background: #4c5553; border: 1.500px solid #222b2c; }
      .head.olive { background: linear-gradient(#5d6b50, #5b6950); }
      .head.green { background: linear-gradient(#486856, #4d6f5b); }
      .head.small { display: flex; justify-content: space-between; align-items: center; font-size: 9px; line-height: 10px; }
      .small i { display: none; }
      .gap { background: linear-gradient(90deg, #263135, #36444a); }
      .lane { position: relative; min-height: 0; overflow: hidden; border-bottom: 1px solid #1d2d33; }
      .clip { position: absolute; left: 124px; top: 1px; width: 27px; height: 33px; background: #2a3c3c; color: #dce6e2; }
      .clip div { height: 11px; background: #4d6253; display: flex; align-items: center; padding-left: 2px; gap: 4px; font-size: 8px; line-height: 10px; color: #708674; }
      .sliver { position: absolute; left: 684px; top: 0; }`;
  }
  html() {
    const [h, name, w, state, clips] = TRACKS[this.getAttribute('i')];
    this.style.height = h + 'px';
    const audio = state.includes('audio') || state.includes('song');
    let lane = clips.map(([bar, bars, label, lw, notes]) =>
      `<fl-clip n="${notes}" style="left:${((bar - 1) * BAR).toFixed(1)}px;width:${(bars * BAR).toFixed(1)}px">${bar === 45 || bar === 5 ? '' : `<fl-text w="${lw}">${label}</fl-text>`}</fl-clip>`).join('');
    if (state.includes('song')) lane = '<fl-song-wave></fl-song-wave>';
    if (state.includes('olive')) lane = '<svg class="sliver" width="3" height="35"><path d="M1 0h1v13H1z" fill="#657452"/><path d="M3 12v22Q-1 24 1 14z" fill="#d5dbcf"/></svg>';
    if (state.includes('green')) lane = `<div class="clip"><div><svg width="8" height="7" stroke="#e2e9e2"><path d="M1 0v7M0 3.500h8M4 2v3M6 2v3"/></svg><span>S</span><span>g</span></div>
      <svg width="27" height="22"><path d="M0 11l5-2 2-2 2 1 1-4 2 2 1-4 2 5 1-6 2 4 1 1 1-3 2 4 1 3 4 1-4 1-1 3-2 5-1-4-1 1-2 5-1-6-2 5-1-4-2 1-1-3-2 1-2-2z" fill="#b5cfbd"/></svg></div>`;
    return `
      <div class="head ${state} ${h < 20 ? 'small' : ''}"><fl-text w="${w}">${name}</fl-text><i>...</i>
        <span class="led">${audio ? '<fl-icon n="wave" s="12"></fl-icon>' : ''}<b></b></span></div>
      <div class="gap"></div>
      <div class="lane">${lane}</div>`;
  }
}
customElements.define('fl-track', FlTrack);

class FlPlaylist extends FlElement {
  css() {
    return `
      :host { display: grid; grid-template: 32.200px 1fr / 1fr 17px; overflow: hidden; background: #424d52; }
      .top { display: grid; grid-template: 16px 16.200px / 89px 1fr; padding-left: 4px; }
      .corner { grid-row: 1 / 3; display: flex; flex-direction: column; justify-content: space-between; color: #8a969a; background: #59656a; clip-path: polygon(18px 1px, 100% 1px, 100% 100%, 0 100%); }
      .corner div { display: flex; align-items: center; justify-content: flex-end; padding: 0 5px 0 0; gap: 8px; }
      .corner p { display: flex; gap: 5px; justify-content: flex-end; margin: 0 0 3px; padding-right: 4px; font: 700 6px/12px "Open Sans", sans-serif; }
      .over { display: flex; background: #3c474b; border-top: 1px solid #323c41; }
      .over i { width: 14px; display: flex; align-items: center; justify-content: center; background: #4c575c; border: 1px solid #5a656a; color: #1d272b; }
      .view { width: 281px; background: linear-gradient(#7e8b84 0 1px, #5f6e72 1px); }
      .rest { flex: 1; }
      .over svg { display: block; }
      .ruler { display: flex; background: linear-gradient(#1b282d, #1f2e34); color: #a0adb1; overflow: hidden; }
      .ruler span { flex: none; width: 38.160px; font-size: 8px; line-height: 17px; }
      .ruler span:nth-child(odd) { font-size: 9.500px; color: #b9c5c8; }
      .ruler .one { color: #1c282d; }
      .one::before { content: ""; position: absolute; margin: 1px 0 0 0; border: 3.500px solid #c1ee5b; border-right-color: transparent; border-bottom-color: transparent; }
      .tracks { position: relative; padding-left: 5px; overflow: hidden; background: #424d52; min-height: 0; }
      .grid { position: absolute; left: 93px; right: 0; top: 0; bottom: 0;
        background: repeating-linear-gradient(90deg, #18272e 0 1px, transparent 1px 76.320px),
          repeating-linear-gradient(90deg, rgba(22, 36, 43, .6) 0 1px, transparent 1px 19.080px),
          repeating-linear-gradient(90deg, rgba(22, 36, 43, .42) 0 1px, transparent 1px 9.540px),
          repeating-linear-gradient(90deg, #36474f 0 76.320px, #30414a 76.320px 152.640px); }
      fl-track { position: relative; }
      .side { display: flex; flex-direction: column; padding-left: 1px; background: #394347; }
      .side i { display: flex; align-items: center; justify-content: center; width: 15px; height: 15.500px; background: #505b60; border: 1px solid #616c70; color: #1d272b; }
      .thumb { height: 26px; width: 15px; background: #505b60; border: 1px solid #5f6a6e; }`;
  }
  html() {
    let marks = '';
    for (let b = 1; b <= 45; b += 2) marks += `<span class="${b === 1 ? 'one' : ''}"><fl-text w="${(b < 10 ? 4 : 8) + (b % 4 === 1 ? 1 : 0)}">${b}</fl-text></span>`;
    return `
      <div class="top">
        <div class="corner"><div><fl-icon n="wave" s="14"></fl-icon><fl-icon n="auto" s="13"></fl-icon><span style="color:#e2e7e8"><fl-icon n="piano" s="12"></fl-icon></span></div>
          <p><span style="color:#dfe5e6"><fl-text w="15">NOTE</fl-text></span><fl-text w="16">CHAN</fl-text><fl-text w="10">PAT</fl-text></p></div>
        <div class="over"><i><fl-icon n="chevl" s="9"></fl-icon></i><div class="view"><svg width="281" height="14" stroke="#879290" opacity=".7"><path d="M20 3.500h235M165 6.500h40M224 5.500h57M224 9.500h50" fill="none"/></svg></div>
          <div class="rest"><svg width="547" height="14" stroke="#566164"><path d="M0 4.500h240M60 10.500h180M0 7.500h120" opacity=".6"/><path d="M291 1.500h155" stroke="#6d7a6c"/></svg></div><i><fl-icon n="chevr" s="9"></fl-icon></i></div>
        <div class="ruler">${marks}</div>
      </div>
      <div class="side" style="grid-row:1/3;grid-column:2"><i><fl-icon n="dot" s="12"></fl-icon></i><i><fl-icon n="chevu" s="8"></fl-icon></i><div class="thumb"></div><span style="flex:1"></span><i><fl-icon n="chevd" s="8"></fl-icon></i></div>
      <div class="tracks"><div class="grid"></div>${TRACKS.map((_, i) => `<fl-track i="${i}"></fl-track>`).join('')}</div>`;
  }
}
customElements.define('fl-playlist', FlPlaylist);

class FlArranger extends FlElement {
  css() {
    return `
      :host { display: grid; grid-template: 20px 1fr / 125px 1fr; min-width: 0; min-height: 0; overflow: hidden; background: #404b50; border-left: 1px solid #2b3539; margin-left: 6px; box-sizing: border-box; }
      .title { grid-column: 1 / 3; display: flex; align-items: center; padding: 0 5px 0 7px; font-size: 11px; line-height: 18px; color: #dce3e4; }
      .title > * { margin-right: 5px; }
      fl-picker, fl-playlist { min-height: 0; }`;
  }
  html() {
    const tools = ['brush', 'no', 'mute', 'slip', 'slice', 'select', 'search', 'play2'];
    return `
      <div class="title">
        <fl-icon n="right" s="8"></fl-icon><fl-icon n="magnet" s="12" style="margin-left:1px"></fl-icon><span style="color:#e2ad3c;margin:2px 4px 0 10px"><fl-icon n="pencil" s="12"></fl-icon></span>
        ${tools.map(t => `<fl-icon n="${t}" s="12" style="margin-right:4.900px"></fl-icon>`).join('')}
        <fl-icon n="speaker" s="12" style="margin-left:8px"></fl-icon><fl-text w="41">Playlist -</fl-text>
        <fl-text w="28" style="margin-left:132px">Snare</fl-text><span style="color:#7f8c90"><fl-icon n="right" s="8"></fl-icon></span>
        <span style="flex:1"></span><fl-icon n="min" s="9" style="margin:-8px 6px 0 0"></fl-icon><fl-icon n="max" s="9" style="margin-right:6px"></fl-icon><fl-icon n="close" s="9" style="margin:0"></fl-icon>
      </div>
      <fl-picker></fl-picker><fl-playlist></fl-playlist>`;
  }
}
customElements.define('fl-arranger', FlArranger);

const MENU = ['#Base note', 'C3|10', '*C4|10', 'C5|10', '#Layout', 'Layout FPC (C4)|61', 'Layout Janko|50', 'Layout Performance mode|102', '*Layout Piano|50',
  'Layout Slicex (C4)|68', 'Major|23', 'Major + Chords|61', 'Major Bebop|50', 'Major Chordmap|66', 'Major Pentatonic|66', 'Minor Harmonic|64', 'Minor Hungarian|66',
  'Minor Melodic|57', 'Minor Natural (Aeolian)|91', 'Minor Natural + Chords|93', 'Minor Natural Chordmap|98', 'Minor Neopolitan|69', 'Minor Pentatonic|67',
  'Other Arabic|49', 'Other Blues|45', 'Other Diminished|68', 'Other Dominant Bebop|91', 'Other Dorian|51', 'Other Enigmatic|63', 'Other Japanese Insen|83',
  'Other Locrian|53', 'Other Lydian|50', 'Other Mixolydian|67', 'Other Neopolitan|68', 'Other Phrygian|59', 'Other Whole Tone|71'];

class FlPopup extends FlElement {
  css() {
    return `
      :host { display: block; position: absolute; left: 454px; top: 53px; width: 134px; height: 547.500px; box-sizing: border-box; padding: 1px 2px; border: 1px solid #101619; background: #b7c1c5; box-shadow: 1px 1px 2px rgba(0, 0, 0, .5); font-size: 9px; }
      .t { height: 12.900px; line-height: 12.500px; padding-left: 2px; background: #8f9b9f; color: #dbe1e2; font-size: 8px; }
      .o { display: flex; align-items: center; height: 15.200px; padding-left: 2px; gap: 3.500px; color: #1a2225; }
      .o i { width: 7px; height: 7px; border-radius: 50%; border: 1px solid #98a4a8; }
      .o.on i { background: radial-gradient(#0d1315 0 1.800px, transparent 2.500px); }
      fl-text { line-height: 12px; }`;
  }
  html() {
    return MENU.map(m => {
      if (m[0] === '#') return `<div class="t"><fl-text w="${m.length > 8 ? 33 : 22}">${m.slice(1)}</fl-text></div>`;
      const on = m[0] === '*';
      const [label, w] = m.replace('*', '').split('|');
      return `<div class="o ${on ? 'on' : ''}"><i></i><fl-text w="${w}">${label}</fl-text></div>`;
    }).join('');
  }
}
customElements.define('fl-popup', FlPopup);

class WinTaskbar extends FlElement {
  css() {
    return `
      :host { display: flex; height: 32px; background: #1f201e; color: #eee; font-size: 12px; align-items: stretch; overflow: hidden; position: relative; }
      .start { width: 38px; display: flex; align-items: center; justify-content: center; }
      .search { width: 275px; display: flex; align-items: center; gap: 9px; padding-left: 9px; background: #333433; border: 1px solid #565756; color: #e2e2e2; margin-right: 1px; }
      .app { position: relative; width: 38.200px; margin-right: 1.200px; display: flex; align-items: center; justify-content: center; }
      .app.run::after { content: ""; position: absolute; left: 3px; right: 3px; bottom: 0; height: 2px; background: #76b5e2; }
      .app.cur { background: #4a4b49; }
      .app.cur::after { left: 0; right: 0; }
      .badge { position: absolute; left: 19px; top: 14px; width: 12px; height: 12px; border-radius: 50%; background: #d83c45; font-size: 7.500px; line-height: 12px; text-align: center; color: #fff; }
      .gpu { width: 19px; height: 18px; display: flex; flex-direction: column; font: italic 700 5px/5px "Liberation Sans"; color: #fff; background: linear-gradient(150deg, #333 20%, #b3152c 22% 58%, #111 60%); border: 1px solid #777; border-width: 1px 1px 0; padding-top: 7px; }
      .tray { margin-left: auto; display: flex; align-items: center; padding-right: 9px; }
      .clock { width: 54px; margin: 0 12px 0 3px; display: flex; flex-direction: column; align-items: center; font-size: 10px; line-height: 14px; }
      .note { position: relative; width: 23px; height: 20px; }
      .note b { position: absolute; left: 6px; top: 6px; width: 13px; height: 13px; border-radius: 50%; border: 1px solid #888; background: #333; font: 8px/12px "Open Sans"; text-align: center; }`;
  }
  html() {
    const app = (n, s, cls = '', extra = '') => `<div class="app ${cls}">${n ? `<fl-icon n="${n}" s="${s}"></fl-icon>` : ''}${extra}</div>`;
    return `
      <div class="start"><fl-icon n="win" s="14"></fl-icon></div>
      <div class="search"><fl-icon n="lens" s="14"></fl-icon><fl-text w="102">Type here to search</fl-text></div>
      ${app('taskview', 14)}${app('edge', 20)}${app('explorer', 17, 'run')}${app('store', 19)}
      ${app('', 0, 'run', '<div class="gpu"><fl-text w="12">GPU</fl-text><fl-text w="16">Tweak II</fl-text></div>')}
      ${app('chrome', 18, 'run')}${app('discord', 19, 'run', '<span class="badge">9+</span>')}${app('fruit', 16, 'run cur')}${app('obs', 18, 'run')}
      <div class="tray">
        <fl-icon n="umbrella" s="18"></fl-icon><fl-text w="61" style="margin:0 14px 0 7px">Straks regen</fl-text>
        <fl-icon n="chevu" s="11"></fl-icon><fl-icon n="cam" s="14" style="margin:0 6px 0 8px"></fl-icon><fl-icon n="wifi" s="12" style="margin-right:5px"></fl-icon><fl-icon n="vol" s="14"></fl-icon>
        <div class="clock"><fl-text w="21">16:32</fl-text><fl-text w="46">28/04/2022</fl-text></div>
        <div class="note"><svg width="14" height="14"><path d="M0 1h13v10H7l-3 3v-3H0z" fill="#fff"/><path d="M2 4h9M2 6h9M2 8h6" stroke="#333"/></svg><b>19</b></div>
      </div>`;
  }
}
customElements.define('win-taskbar', WinTaskbar);

class FlDesktop extends FlElement {
  css() {
    return `
      :host { display: grid; grid-template: 65px 623px 32px / 181px 1099px; width: 1280px; height: 720px; position: relative; overflow: hidden; background: #4e595d; }
      fl-toolbar, win-taskbar { grid-column: 1 / 3; }
      fl-browser { min-height: 0; }
      .cursor { position: absolute; left: 462px; top: 40px; }`;
  }
  html() {
    return `
      <fl-toolbar></fl-toolbar>
      <fl-browser></fl-browser>
      <fl-arranger></fl-arranger>
      <win-taskbar></win-taskbar>
      <fl-popup></fl-popup>
      <svg class="cursor" width="12" height="17"><path d="M1 1v13l3-3 2 5 2-1-2-4h4z" fill="#fff" stroke="#555" stroke-width=".6"/></svg>`;
  }
}
customElements.define('fl-desktop', FlDesktop);
</script>
</body>
</html>
